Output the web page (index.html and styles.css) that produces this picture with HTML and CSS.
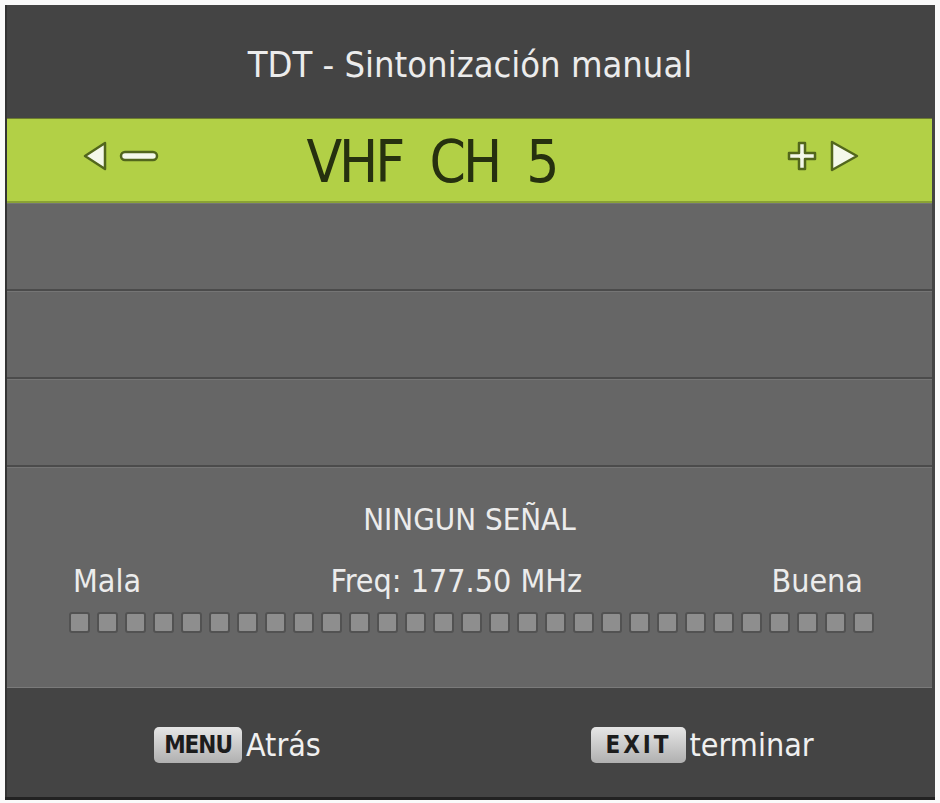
FILE: index.html
```html
<!DOCTYPE html>
<html lang="es">
<head>
    <meta charset="UTF-8">
    <meta name="viewport" content="width=device-width, initial-scale=1.0">
    <title>TDT - Sintonización manual</title>
    <link rel="stylesheet" href="styles.css">
</head>
<body>

<div class="osd">
    <div class="osd-title">TDT - Sintonización manual</div>

    <div class="channel">
        <div class="channel-step">
            <svg width="28" height="32" viewBox="0 0 28 32"><polygon points="24,3 4,16 24,29" class="arrow"/></svg>
            <svg width="40" height="13" viewBox="0 0 40 13"><rect x="2" y="2" width="36" height="8" rx="4" class="arrow"/></svg>
        </div>
        <div class="channel-name">VHF&nbsp;&nbsp;CH&nbsp;&nbsp;5</div>
        <div class="channel-step">
            <svg width="32" height="32" viewBox="0 0 32 32"><path d="M13 3h6v10h10v6H19v10h-6V19H3v-6h10z" class="arrow"/></svg>
            <svg width="32" height="34" viewBox="0 0 32 34"><polygon points="4,3 29,17 4,31" class="arrow"/></svg>
        </div>
    </div>

    <div class="row"></div>
    <div class="row"></div>
    <div class="row"></div>

    <div class="signal">
        <div class="signal-status">NINGUN SEÑAL</div>
        <div class="signal-labels">
            <span>Mala</span>
            <span>Freq: 177.50 MHz</span>
            <span>Buena</span>
        </div>
        <div class="signal-meter" id="meter"></div>
    </div>

    <div class="osd-footer">
        <div class="hint"><span class="key">MENU</span>Atrás</div>
        <div class="hint"><span class="key key-exit">EXIT</span>terminar</div>
    </div>
</div>

<script>
    // 29 blocks in the strength meter, none lit while there is no signal
    const meter = document.getElementById('meter');
    for (let i = 0; i < 29; i++) {
        const block = document.createElement('span');
        block.className = 'block';
        meter.appendChild(block);
    }
</script>

</body>
</html>
```

FILE: styles.css
```css
body {
    margin: 0;
    padding: 0;
    background-color: #fafafa;
    font-family: "DejaVu Sans", sans-serif;
    font-stretch: condensed;
}

.osd {
    width: 930px;
    height: 795px;
    margin: 5px 5px 3px 5px;
    background-color: #444;
    display: flex;
    flex-direction: column;
    box-shadow: inset 2px 0 0 #333;
}

.osd-title {
    height: 113px;
    display: flex;
    justify-content: center;
    align-items: center;
    color: #ececec;
    font-size: 36px;
    padding-top: 6px;
    box-sizing: border-box;
}

.channel {
    height: 85px;
    margin: 0 3px 0 2px;
    background-color: #b2d046;
    border-top: 1px solid #6d7d2e;
    border-bottom: 2px solid #8aa235;
    box-sizing: border-box;
    display: flex;
    align-items: center;
    justify-content: space-between;
    padding: 0 72px 0 74px;
}

.channel-step {
    display: flex;
    align-items: center;
    gap: 10px;
    margin-top: -8px;
}

.arrow {
    fill: #f4f8ea;
    stroke: #52661c;
    stroke-width: 2.5;
    stroke-linejoin: round;
}

.channel-name {
    color: #26300f;
    font-size: 58px;
    letter-spacing: -3px;
    margin-right: 82px;
    margin-top: 4px;
}

.row {
    height: 88px;
    margin: 0 3px 0 2px;
    background-color: #666;
    border-top: 1px solid #757575;
    border-bottom: 2px solid #4b4b4b;
    box-sizing: border-box;
}

.signal {
    height: 221px;
    margin: 0 3px 0 2px;
    background-color: #666;
    border-top: 1px solid #757575;
    border-bottom: 1px solid #7a7a7a;
    box-sizing: border-box;
    padding: 35px 0 0 62px;
    color: #ececec;
}

.signal-status {
    text-align: center;
    font-size: 31px;
    line-height: 32px;
    margin-left: -62px;
}

.signal-labels {
    display: flex;
    justify-content: space-between;
    width: 790px;
    margin: 30px 0 0 4px;
    font-size: 32px;
    line-height: 32px;
}

.signal-meter {
    display: flex;
    gap: 7px;
    margin-top: 15px;
}

.block {
    width: 17px;
    height: 17px;
    background-color: #8e8e8e;
    border: 2px solid #525252;
    border-radius: 3px;
}

.osd-footer {
    flex: 1;
    display: grid;
    grid-template-columns: 1fr 1fr;
    align-items: center;
    color: #f0f0f0;
    font-size: 32px;
    border-bottom: 3px solid #222;
    padding-top: 4px;
}

.hint {
    display: flex;
    align-items: center;
    justify-content: center;
    gap: 4px;
}

.key {
    display: inline-block;
    padding: 6px 10px;
    background: linear-gradient(#e6e6e6, #b0b0b0);
    border-radius: 5px;
    color: #1c1c1c;
    font-size: 24px;
    font-weight: bold;
    letter-spacing: -1px;
    line-height: 24px;
}

.key-exit {
    padding: 6px 14px;
    letter-spacing: 3px;
}
```
